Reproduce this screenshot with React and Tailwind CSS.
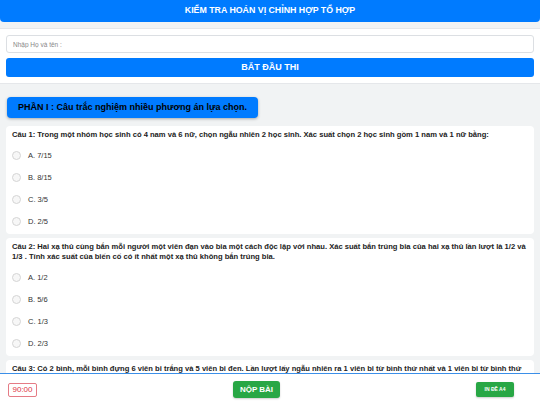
const questions = [
  {
    text: "Câu 1: Trong một nhóm học sinh có 4 nam và 6 nữ, chọn ngẫu nhiên 2 học sinh. Xác suất chọn 2 học sinh gồm 1 nam và 1 nữ bằng:",
    options: ["A. 7/15", "B. 8/15", "C. 3/5", "D. 2/5"],
  },
  {
    text: "Câu 2: Hai xạ thủ cùng bắn mỗi người một viên đạn vào bia một cách độc lập với nhau. Xác suất bắn trúng bia của hai xạ thủ lần lượt là 1/2 và 1/3 . Tính xác suất của biến cố có ít nhất một xạ thủ không bắn trúng bia.",
    options: ["A. 1/2", "B. 5/6", "C. 1/3", "D. 2/3"],
  },
  {
    text: "Câu 3: Có 2 bình, mỗi bình đựng 6 viên bi trắng và 5 viên bi đen. Lần lượt lấy ngẫu nhiên ra 1 viên bi từ bình thứ nhất và 1 viên bi từ bình thứ 2. Tính xác suất để lấy được 2 viên bi cùng màu.",
    options: ["A. 61/121", "B. 60/121", "C. 30/121", "D. 31/121"],
  },
];

const App = () => {
  return (
    <div className="min-h-screen bg-[#f1f3f4] pb-[40px]" style={{ fontFamily: '"Liberation Sans", Arial, sans-serif' }}>
      {/* Header */}
      <div className="h-[22px] bg-[#007bff] rounded-b-[4px] flex items-center justify-center">
        <span className="text-white font-bold text-[8.8px]">KIỂM TRA HOÁN VỊ CHỈNH HỢP TỔ HỢP</span>
      </div>

      {/* Name card */}
      <div className="mt-[6px] bg-white border-y border-[#e5e7ea] px-[6px] pt-[6px] pb-[6px] flex flex-col gap-[5px]">
        <input
          className="h-[18px] w-full border border-[#dcdfe3] rounded-[3px] px-[6px] text-[6.5px] outline-none placeholder:text-[#888]"
          placeholder="Nhập Họ và tên :"
        />
        <button className="h-[19px] w-full bg-[#007bff] rounded-[3px] text-white font-bold text-[9px]">BẮT ĐẦU THI</button>
      </div>

      {/* Section heading */}
      <div className="px-[7px] mt-[9px]">
        <div className="inline-flex items-center h-[21px] bg-[#007bff] rounded-[4px] px-[11px] shadow-[0_1px_3px_rgba(0,0,0,0.3)]">
          <span className="text-black font-bold text-[9px]">PHẦN I : Câu trắc nghiệm nhiều phương án lựa chọn.</span>
        </div>
      </div>

      {/* Questions */}
      <div className="px-[6px] mt-[8px] flex flex-col gap-[4px]">
        {questions.map((q, i) => (
          <div key={i} className="bg-white rounded-[4px] px-[6px] pt-[4px] pb-[1px]">
            <p className="text-[7.6px] leading-[10.5px] font-bold text-[#222]">{q.text}</p>
            <div className="mt-[4px] flex flex-col">
              {q.options.map((o) => (
                <label key={o} className="h-[22px] flex items-center gap-[7px]">
                  <span className="w-[9px] h-[9px] rounded-full border border-[#d5d5d5] bg-[#f7f7f7] shrink-0"></span>
                  <span className="text-[7.5px] text-[#333]">{o}</span>
                </label>
              ))}
            </div>
          </div>
        ))}
      </div>

      {/* Footer */}
      <div className="fixed bottom-0 left-0 right-0 h-[32px] bg-white border-t border-[#3b8fe8] flex items-center justify-between pl-[8px] pr-[26px]">
        <div className="w-[29px] h-[14px] border border-[#e57b85] rounded-[2px] flex items-center justify-center">
          <span className="text-[#dc3545] text-[8px] font-medium">90:00</span>
        </div>
        <button className="w-[47px] h-[17px] bg-[#28a745] rounded-[3px] text-white font-bold text-[8px] shadow-[0_1px_2px_rgba(0,0,0,0.2)]">NỘP BÀI</button>
        <button className="w-[38px] h-[15px] bg-[#28a745] rounded-[2px] text-white font-bold text-[5px] shadow-[0_1px_2px_rgba(0,0,0,0.2)]">IN ĐỀ A4</button>
      </div>
    </div>
  );
};

export default App;
